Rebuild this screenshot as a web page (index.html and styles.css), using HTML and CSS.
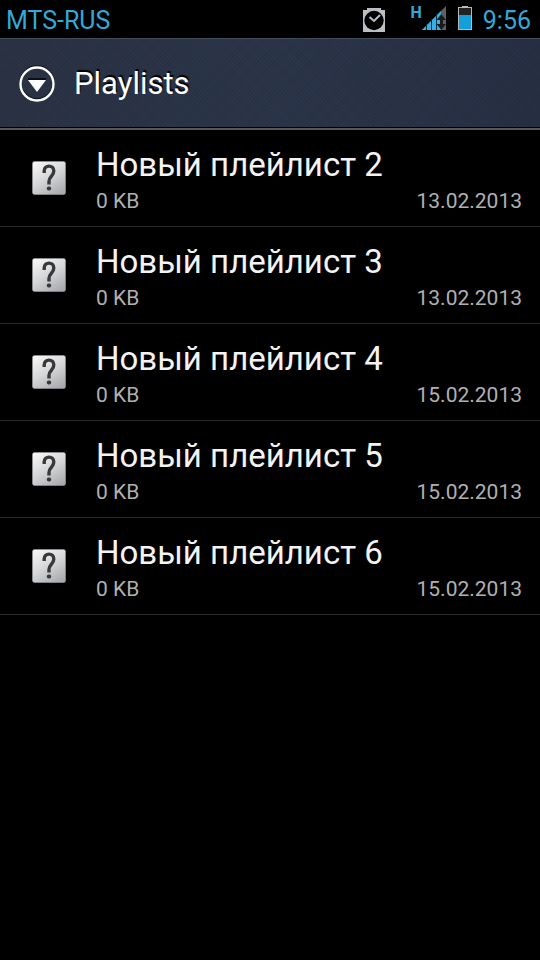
FILE: index.html
```html
<!DOCTYPE html>
<html lang="ru">
<head>
<meta charset="utf-8">
<meta name="viewport" content="width=device-width, initial-scale=1">
<title>Playlists</title>
<link rel="stylesheet" href="styles.css">
</head>
<body>
<svg class="defs" width="0" height="0" aria-hidden="true">
  <defs>
    <linearGradient id="tile" x1="0.2" y1="0" x2="0.8" y2="1">
      <stop offset="0" stop-color="#f4f4f4"/>
      <stop offset="0.5" stop-color="#d4d5d7"/>
      <stop offset="1" stop-color="#a8aaad"/>
    </linearGradient>
    <symbol id="unknown" viewBox="0 0 36 36">
      <rect x="1.5" y="1.5" width="33" height="33" rx="2" fill="url(#tile)" stroke="#9b9c9e" stroke-width="0.6"/>
      <path d="M13.2 13 V11 C13.2 4.4 22.8 4.6 22.8 11 C22.8 16.2 18 16.6 18 21.4 V24.4" fill="none" stroke="#39393b" stroke-width="3.4"/>
      <rect x="15.8" y="26.4" width="4.4" height="4.2" rx="1.8" fill="#39393b"/>
    </symbol>
  </defs>
</svg>
<div class="status">
  <span class="carrier">MTS-RUS</span>
  <svg class="alarm" width="24" height="26" viewBox="0 0 24 26" aria-label="Alarm">
    <path d="M1 3 H5 V1 H19 V3 H23 V25 H1 Z" fill="#b9bfc2"/>
    <circle cx="12" cy="13.5" r="9.7" fill="#000"/>
    <path d="M7.5 10 L12 14 L18 8" fill="none" stroke="#b9bfc2" stroke-width="2"/>
  </svg>
  <span class="network">H</span>
  <svg class="signal" width="24" height="24" viewBox="0 0 24 24" aria-label="Signal">
    <path d="M0 24 L24 0 V24 Z" fill="#606060"/>
    <path d="M0 24 L19 5 V24 Z" fill="#33b0e4"/>
    <path d="M4.5 18 V24 M9.5 13 V24 M14.5 8 V24" stroke="#0b2a38" stroke-width="1"/>
    <path d="M14.5 14 L19.3 8 L24 14 H21 V18 H24 L19.3 24 L14.5 18 H18 V14 Z" fill="#1b1b1b"/>
  </svg>
  <svg class="battery" width="14" height="24" viewBox="0 0 14 24" aria-label="Battery">
    <rect x="4" y="0" width="6" height="2" fill="#b9b9b9"/>
    <rect x="0.5" y="1.5" width="13" height="22" fill="#222" stroke="#b9b9b9"/>
    <rect x="1" y="9" width="12" height="14" fill="#139fd7"/>
  </svg>
  <time class="clock">9:56</time>
</div>
<header class="bar">
  <button class="menu" type="button" aria-label="Menu">
    <svg width="38" height="38" viewBox="0 0 38 38">
      <circle cx="19" cy="18" r="16.5" fill="none" stroke="#0b0f18" stroke-width="2.5"/>
      <circle cx="19" cy="19" r="16.5" fill="none" stroke="#fff" stroke-width="2.4"/>
      <path d="M10 14 H28" stroke="#0b0f18" stroke-width="2"/>
      <path d="M10 15 H28 L19 27 Z" fill="#fff"/>
    </svg>
  </button>
  <h1 class="title">Playlists</h1>
</header>
<main>
  <ul class="list">
    <li class="row"><svg class="icon"><use href="#unknown"/></svg><div class="text"><h2 class="name">Новый плейлист 2</h2><div class="meta"><span>0 KB</span><time>13.02.2013</time></div></div></li>
    <li class="row"><svg class="icon"><use href="#unknown"/></svg><div class="text"><h2 class="name">Новый плейлист 3</h2><div class="meta"><span>0 KB</span><time>13.02.2013</time></div></div></li>
    <li class="row"><svg class="icon"><use href="#unknown"/></svg><div class="text"><h2 class="name">Новый плейлист 4</h2><div class="meta"><span>0 KB</span><time>15.02.2013</time></div></div></li>
    <li class="row"><svg class="icon"><use href="#unknown"/></svg><div class="text"><h2 class="name">Новый плейлист 5</h2><div class="meta"><span>0 KB</span><time>15.02.2013</time></div></div></li>
    <li class="row"><svg class="icon"><use href="#unknown"/></svg><div class="text"><h2 class="name">Новый плейлист 6</h2><div class="meta"><span>0 KB</span><time>15.02.2013</time></div></div></li>
  </ul>
</main>
</body>
</html>
```
FILE: styles.css
```css
* {
  box-sizing: border-box;
}

body {
  margin: 0;
  min-height: 100vh;
  background: #000;
  color: #f3f3f3;
  font-family: Roboto, "Noto Sans", sans-serif;
}

.defs {
  position: absolute;
}

.status {
  display: flex;
  height: 38px;
  padding: 0 9px 0 6px;
  color: #33a9d8;
  font-size: 25px;
  line-height: 41px;
}

.carrier {
  flex: 1;
}

.alarm {
  margin: 7px 24px 0 0;
}

.network {
  font-size: 16px;
  font-weight: 700;
  line-height: 26px;
}

.signal {
  margin: 6px 12px 0 0;
}

.battery {
  margin: 6px 11px 0 0;
}

.bar {
  display: flex;
  align-items: center;
  gap: 18px;
  height: 92px;
  padding: 0 18px;
  background:
    repeating-linear-gradient(45deg, rgba(255, 255, 255, 0.01) 0 1px, transparent 1px 3px),
    repeating-linear-gradient(-45deg, rgba(0, 0, 0, 0.05) 0 1px, transparent 1px 3px),
    linear-gradient(90deg, #293143, #2a3448 50%, #262e43);
  border-top: 1px solid #434a58;
  border-bottom: 2px solid #585858;
  box-shadow: inset 0 -1px #000;
}

.menu {
  width: 38px;
  height: 38px;
  padding: 0;
  border: 0;
  background: none;
}

.menu svg {
  display: block;
}

.title {
  margin: 0;
  color: #fff;
  font-size: 31px;
  font-weight: 400;
  line-height: 36px;
  text-shadow: 1px -2px 1px #000;
}

.list {
  margin: 0;
  padding: 0;
  list-style: none;
}

.row {
  display: flex;
  align-items: center;
  gap: 29px;
  height: 97px;
  padding: 0 18px 0 31px;
  border-bottom: 1px solid #292929;
}

.icon {
  flex: none;
  width: 36px;
  height: 36px;
}

.text {
  flex: 1;
  padding-top: 6px;
}

.name {
  margin: 0;
  font-size: 33px;
  font-weight: 400;
  line-height: 40px;
}

.meta {
  display: flex;
  justify-content: space-between;
  color: #b0b0b0;
  font-size: 21px;
  line-height: 32px;
}
```
